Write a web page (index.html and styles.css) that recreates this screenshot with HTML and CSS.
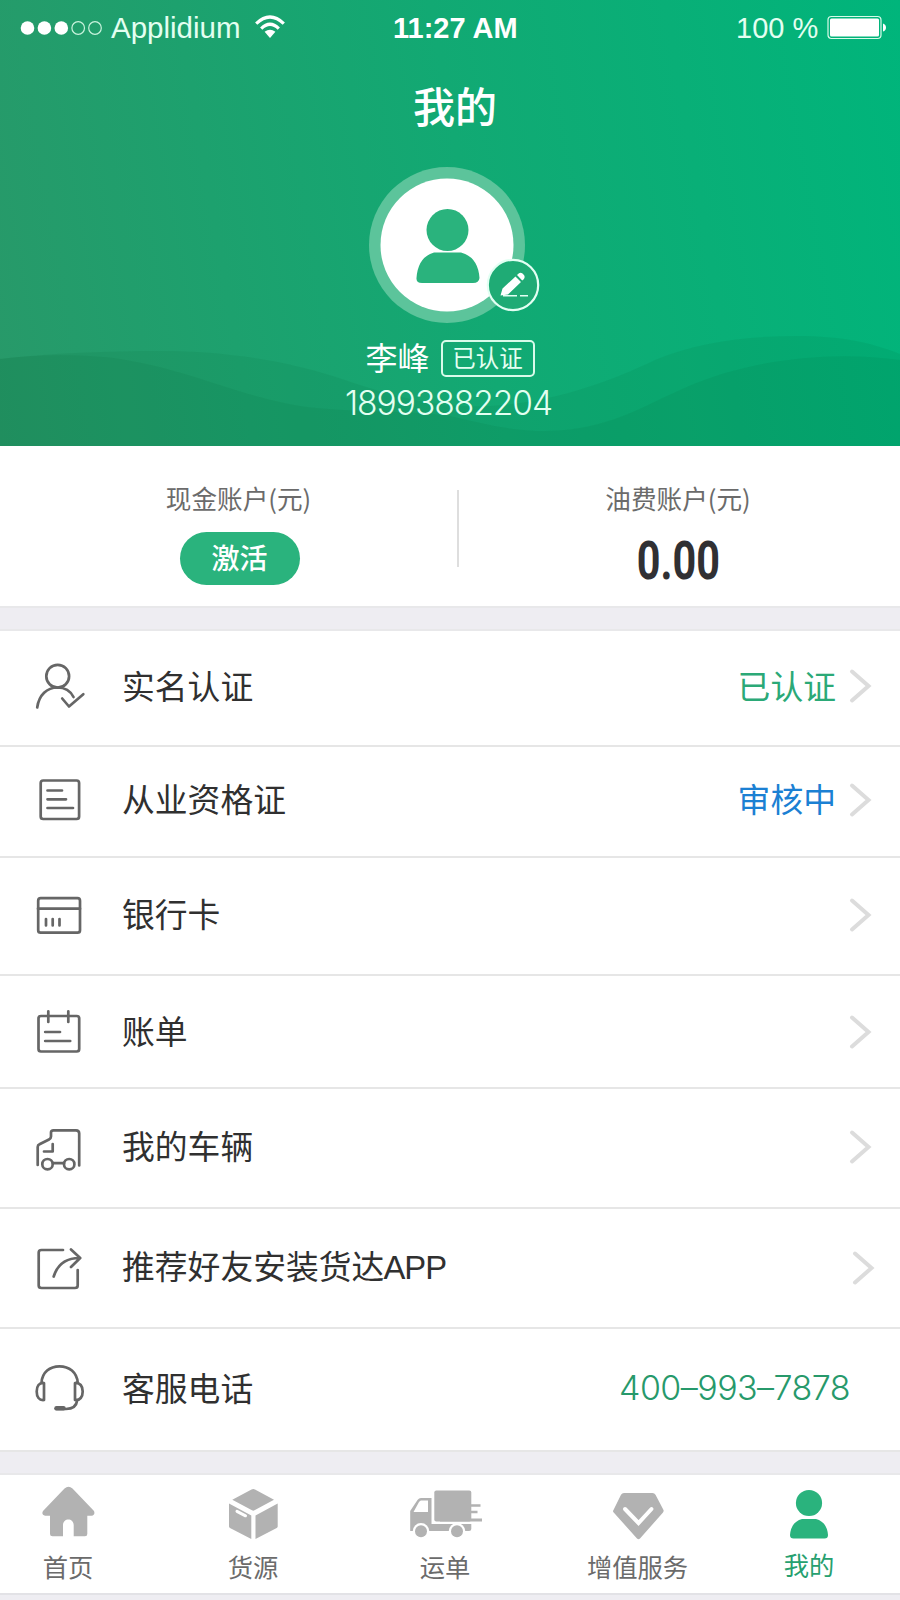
FILE: index.html
```html
<!DOCTYPE html>
<html lang="zh-CN">
<head>
<meta charset="utf-8">
<title>我的</title>
<link rel="stylesheet" href="styles.css">
</head>
<body>
<div class="app">
  <header class="hero">
    <svg class="waves" viewBox="0 0 900 446" aria-hidden="true">
      <path d="M0 359C50 353 110 351 161 351C225 351 290 361 345 380C400 399 440 408 490 406C550 403 610 382 655 360C700 341 750 336 798 336C840 336 870 342 900 354V446H0Z"/>
      <path d="M0 359C40 354 85 354 120 359C190 370 235 395 300 406C350 413 410 410 450 416C480 423 510 431 545 431C610 430 640 407 689 386C750 360 830 350 900 360V446H0Z"/>
    </svg>
    <div class="status">
      <div class="carrier">
        <svg class="dots" viewBox="0 0 84 18"><g fill="#fff"><circle cx="7.5" cy="9" r="6.8"/><circle cx="24.4" cy="9" r="6.8"/><circle cx="41.3" cy="9" r="6.8"/></g><g fill="none" stroke="#c9f3dd" stroke-width="1.2"><circle cx="58.2" cy="9" r="6.3"/><circle cx="75" cy="9" r="6.3"/></g></svg>
        <span class="carrier-name">Applidium</span>
        <svg class="wifi" viewBox="0 0 30 24"><g fill="none" stroke="#fff" stroke-width="3.2"><path d="M1.2 8.6Q15-4.600 28.800 8.600"/><path d="M6.200 13.600Q15 5 23.800 13.600"/></g><path d="M9.600 16.800Q15 12.600 20.400 16.800L15 23Z" fill="#fff"/></svg>
      </div>
      <div class="clock">11:27 AM</div>
      <div class="power"><span>100 %</span>
        <svg class="battery" viewBox="0 0 60 26"><rect x="1" y="1.500" width="53" height="22" rx="3.500" fill="none" stroke="#d9fbea" stroke-width="1.200"/><rect x="3" y="3.500" width="49" height="18" rx="1.500" fill="#fff"/><path d="M56 8.500q3 1 3 4t-3 4z" fill="#fff"/></svg>
      </div>
    </div>
    <h1 class="title">我的</h1>
    <div class="profile">
      <div class="avatar">
        <svg viewBox="0 0 156 156"><circle cx="78" cy="78" r="78" fill="#5cc49b"/><circle cx="78" cy="78" r="66.500" fill="#fff"/><circle cx="78.500" cy="63" r="21" fill="#2ab37d"/><path d="M65 85.500H92Q109 90 110.500 111Q110 116 104 116H53Q47 116 47.500 111Q49 90 65 85.500Z" fill="#2ab37d"/></svg>
        <svg class="edit" viewBox="0 0 54 54"><circle cx="27" cy="27" r="25.200" fill="#1fab75" stroke="#e3fff3" stroke-width="2.200"/><path d="M14.500 37.500L16.500 30.500L29.500 18.500L35 24L22 36.500ZM31 17L33 15.200Q35.500 14 38 17Q39.500 19.500 37.500 21.500L36.200 22.500Z" fill="#fff"/><path d="M17 37.800H31M34 37.800H42" stroke="#e3fff3" stroke-width="1.400"/></svg>
      </div>
      <div class="who"><span class="name">李峰</span><span class="tag">已认证</span></div>
      <div class="phone">18993882204</div>
    </div>
  </header>

  <section class="accounts">
    <div class="account"><span class="account-label">现金账户(元)</span><span class="activate">激活</span></div>
    <div class="split"></div>
    <div class="account"><span class="account-label">油费账户(元)</span><span class="amount">0.00</span></div>
  </section>

  <ul class="menu">
    <li class="row row-1">
      <svg class="icon" viewBox="32 658.500 56 56"><circle cx="57.700" cy="676.700" r="11.400"/><path d="M37.200 708C39 695.500 47 688 57.500 688C65 688 70.500 691.500 73.500 697.500M62.200 699L69 707L83.300 694.700"/></svg>
      <span class="label">实名认证</span><span class="value green">已认证</span>
      <svg class="arrow" viewBox="0 0 24 36"><path d="M4 3.500L20.500 18L4 32.500"/></svg>
    </li>
    <li class="row row-2">
      <svg class="icon" viewBox="32 772 56 56"><rect x="40.700" y="780.500" width="38.400" height="38.500" rx="2.500"/><path d="M47.500 790.500H62M47.500 799.300H66M47.500 808H73"/></svg>
      <span class="label">从业资格证</span><span class="value blue">审核中</span>
      <svg class="arrow" viewBox="0 0 24 36"><path d="M4 3.500L20.500 18L4 32.500"/></svg>
    </li>
    <li class="row row-3">
      <svg class="icon" viewBox="32 886 56 56"><rect x="38.200" y="897.200" width="41.800" height="34.500" rx="2.500"/><path d="M38 907.700H80M46 918V924.500M52.700 918V924.500M59.500 918V924.500"/></svg>
      <span class="label">银行卡</span>
      <svg class="arrow" viewBox="0 0 24 36"><path d="M4 3.500L20.500 18L4 32.500"/></svg>
    </li>
    <li class="row row-4">
      <svg class="icon" viewBox="32 1004 56 56"><rect x="38.500" y="1016" width="40.700" height="35.500" rx="2.500"/><path d="M48.300 1011.300V1022M68.300 1011.300V1022M45.200 1032H60M45.200 1041H70.200"/></svg>
      <span class="label">账单</span>
      <svg class="arrow" viewBox="0 0 24 36"><path d="M4 3.500L20.500 18L4 32.500"/></svg>
    </li>
    <li class="row row-5">
      <svg class="icon" viewBox="32 1119 56 56"><path d="M37.700 1165V1147Q37.700 1145 39.500 1144.200L49 1139.500Q51 1138.500 51 1136.500V1132.500Q51 1130.300 53.500 1130.300H76Q79.200 1130.300 79.200 1133.500V1165.500M52.700 1144V1151.500H44M53 1163.200H64"/><circle cx="47.500" cy="1164.200" r="5.200"/><circle cx="69.200" cy="1164.200" r="5.200"/></svg>
      <span class="label">我的车辆</span>
      <svg class="arrow" viewBox="0 0 24 36"><path d="M4 3.500L20.500 18L4 32.500"/></svg>
    </li>
    <li class="row row-6">
      <svg class="icon" viewBox="32 1240 56 56"><path d="M63 1250H41.500Q38.700 1250 38.700 1252.500V1285.500Q38.700 1288 41.500 1288H75Q77.700 1288 77.700 1285.500V1270M53.700 1276.500C57 1266 64 1257.800 80 1258M71 1249.500L80.200 1258L71 1267"/></svg>
      <span class="label">推荐好友安装货达<span class="latin">APP</span></span>
      <svg class="arrow" viewBox="0 0 24 36"><path d="M4 3.500L20.500 18L4 32.500"/></svg>
    </li>
    <li class="row row-7">
      <svg class="icon" viewBox="32 1361 56 56"><path d="M41.500 1384C42 1373 50 1367.300 59.500 1367.300S77 1373 77.800 1384M44 1384V1401C39 1401.500 36.700 1398 36.700 1392.500S39 1383.500 44 1384ZM75 1384V1401C80 1401.500 82.700 1398 82.700 1392.500S80 1383.500 75 1384ZM77.300 1401C76.500 1407 73 1410 66 1410H56"/><path d="M56.500 1409.300H63.500" stroke-width="4.500"/></svg>
      <span class="label">客服电话</span><span class="value hotline">400–993–7878</span>
    </li>
  </ul>

  <nav class="tabs">
    <div class="tab"><svg viewBox="28 1480 80 64"><path d="M64.500 1488.500Q68.500 1485 72.500 1488.500L94 1511Q95.500 1515 91.500 1515.700H87.300V1534Q87.300 1536.300 85 1536.300H73.700V1525C73.700 1517.500 63 1517.500 63 1525V1536.300H52.500Q50 1536.300 50 1534V1515.700H45Q41 1515 43 1511Z"/></svg><span>首页</span></div>
    <div class="tab"><svg viewBox="213 1480 80 64"><path d="M251.500 1489.500Q253.300 1488.600 255 1489.500L274 1499.700L254.500 1510.300Q253.300 1511 252 1510.300L232.300 1499.700ZM229 1503.500L251.300 1515.500V1539L230 1528Q229 1527.400 229 1526.500ZM277.700 1503.500L255.500 1515.500V1539L276.700 1528Q277.700 1527.400 277.700 1526.500Z"/><path d="M237 1511.300L245.500 1515.800" stroke="#fff" stroke-width="3" stroke-linecap="round"/></svg><span>货源</span></div>
    <div class="tab"><svg viewBox="405 1480 80 64"><rect x="434.300" y="1490.500" width="37" height="31" rx="2"/><path d="M471 1504.200H480.500V1506.700H471ZM471 1510.700H477.500V1513.200H471ZM440 1518.600H482V1521.500H440Z"/><path fill-rule="evenodd" d="M410.200 1531V1511L417.500 1500Q419 1498 421 1498H431.500V1524H471.300V1529Q471.300 1531 469 1531ZM413.500 1512H428V1500.500H421Q420 1500.500 419 1502Z"/><circle cx="421" cy="1531.300" r="8.300" fill="#fff"/><circle cx="457" cy="1531.300" r="8.300" fill="#fff"/><circle cx="421" cy="1531.300" r="6"/><circle cx="457" cy="1531.300" r="6"/></svg><span>运单</span></div>
    <div class="tab"><svg viewBox="598 1480 80 64"><path d="M624 1493H652.500Q654.500 1493 655.500 1494.800L663.500 1510Q664 1511.300 663 1512.500L640 1538.500Q638.500 1540 637 1538.500L613.700 1512.500Q612.500 1511.300 613.500 1510L621 1494.800Q622 1493 624 1493Z"/><path d="M625 1509L638.500 1523L651.500 1509" fill="none" stroke="#fff" stroke-width="4" stroke-linecap="round"/></svg><span>增值服务</span></div>
    <div class="tab active"><svg viewBox="769 1480 80 64"><circle cx="809" cy="1503" r="13.100"/><path d="M802 1519H816Q827 1522 828 1535Q828 1538.500 824.500 1538.500H793.500Q790 1538.500 790 1535Q791 1522 802 1519Z"/></svg><span>我的</span></div>
  </nav>
</div>
</body>
</html>
```
FILE: styles.css
```css
* { box-sizing: border-box; }
body { margin: 0; background: #eeedf2; font-family: "Liberation Sans", "Noto Sans CJK SC", sans-serif; }
svg { display: block; flex: none; }
.app { width: 900px; height: 1600px; overflow: hidden; display: flex; flex-direction: column; }

.hero { position: relative; height: 446px; flex: none; color: #fff; background: linear-gradient(80deg, #289969 0%, #12a973 52%, #00b57b 100%); }
.waves { position: absolute; inset: 0; width: 900px; height: 446px; fill: rgba(0, 90, 50, .085); }
.status, .title, .profile { position: relative; }
.status { height: 56px; display: grid; grid-template-columns: 393px 1fr 164px; align-items: center; font-size: 29.500px; line-height: 56px; }
.carrier { display: flex; align-items: center; padding-left: 20px; color: #e3fff1; }
.dots { width: 84px; height: 18px; margin-right: 7px; }
.carrier-name { letter-spacing: 0; width: 130px; }
.wifi { width: 30px; height: 24px; margin-left: 14px; margin-bottom: 2px; }
.clock { font-weight: 700; font-size: 29px; letter-spacing: 0; }
.power { display: flex; align-items: center; color: #e3fff1; }
.power span { width: 91px; font-size: 29px; letter-spacing: 0; white-space: nowrap; }
.battery { width: 60px; height: 26px; }
.title { margin: 19px 0 0 10px; text-align: center; font: 500 42px/60px "Noto Sans CJK SC", sans-serif; }
.profile { width: 894px; display: flex; flex-direction: column; align-items: center; margin-top: 32px; }
.avatar { position: relative; width: 156px; height: 156px; }
.avatar .edit { position: absolute; left: 117px; top: 91px; width: 54px; height: 54px; }
.who { display: flex; align-items: center; gap: 11px; margin: 13px 0 0 6px; height: 44px; }
.name { margin-bottom: 4px; font: 400 32px/44px "Noto Sans CJK SC", sans-serif; }
.tag { width: 94px; height: 37px; border: 2px solid #d9fbea; border-radius: 5px; text-align: center; font: 400 23.500px/31px "Noto Sans CJK SC", sans-serif; color: #e3fff1; }
.phone { margin: 3px 0 0 3px; font: 300 33.500px/40px Inter, "Liberation Sans", sans-serif; letter-spacing: -1px; color: #e3fff1; }

.accounts { height: 162px; flex: none; display: flex; background: #fff; border-bottom: 2px solid #e8e8ea; }
.account { width: 457px; display: flex; flex-direction: column; align-items: center; padding: 33px 0 0 20px; }
.account-label { font: 400 25.600px/38px "Noto Sans CJK SC", sans-serif; color: #6b6b6b; }
.activate { width: 120px; height: 53px; margin: 15px 0 0 2px; border-radius: 27px; background: #2ab37d; color: #fff; text-align: center; font: 500 28px/51px "Noto Sans CJK SC", sans-serif; }
.split { width: 2px; height: 77px; margin-top: 44px; background: #dedede; }
.split + .account { width: 438px; padding-left: 0; }
.amount { margin-top: 12px; font: 700 53px/64px Roboto, sans-serif; color: #303033; transform: scaleX(.78); }

.menu { list-style: none; margin: 21px 0 0; padding: 0; background: #fff; border-top: 2px solid #e8e8ea; flex: none; }
.row { display: flex; align-items: center; padding: 0 28px 0 32px; border-bottom: 2px solid #e6e6e6; }
.row-1 { height: 116px; padding-bottom: 4px; }
.row-2 { height: 111px; padding-bottom: 4px; }
.row-3 { height: 118px; padding-bottom: 3px; }
.row-4 { height: 113px; }
.row-5 { height: 120px; padding-bottom: 3px; }
.row-6 { height: 120px; padding-right: 25px; padding-bottom: 1px; }
.row-7 { height: 123px; padding-right: 50px; padding-bottom: 3px; }
.icon { width: 56px; height: 56px; fill: none; stroke: #666; stroke-width: 2.700; stroke-linecap: round; stroke-linejoin: round; margin-right: 34px; }
.label, .value { margin-bottom: 3px; font: 400 32.800px/48px "Noto Sans CJK SC", sans-serif; color: #303030; white-space: nowrap; }
.label { margin-right: auto; }
.latin { font-family: "Liberation Sans", sans-serif; letter-spacing: -1px; margin-left: -1px; }
.value { margin-right: 12px; }
.green { color: #2ba977; }
.blue { color: #1b80d3; }
.value.hotline { margin: 0; color: #27996b; font: 300 34px/48px Inter, "Liberation Sans", sans-serif; letter-spacing: -.550px; }
.arrow { width: 24px; height: 36px; fill: none; stroke: #dcdcdc; stroke-width: 4; stroke-linecap: round; }

.tabs { margin-top: 21px; height: 122px; flex: none; border-top: 2px solid #e8e8ea; border-bottom: 2px solid #e2e2e6; background: #fff; display: grid; grid-template-columns: 136px 234px 150px 235px 108px; }
.tab { display: flex; flex-direction: column; align-items: center; padding-top: 5px; font: 400 25.300px/38px "Noto Sans CJK SC", sans-serif; color: #6b6b6b; }
.tab svg { width: 80px; height: 64px; fill: #b2b2b2; margin-bottom: 3px; overflow: visible; }
.tab.active { color: #27a06f; }
.tab.active svg { fill: #2ab37d; margin-bottom: 1px; }
```
